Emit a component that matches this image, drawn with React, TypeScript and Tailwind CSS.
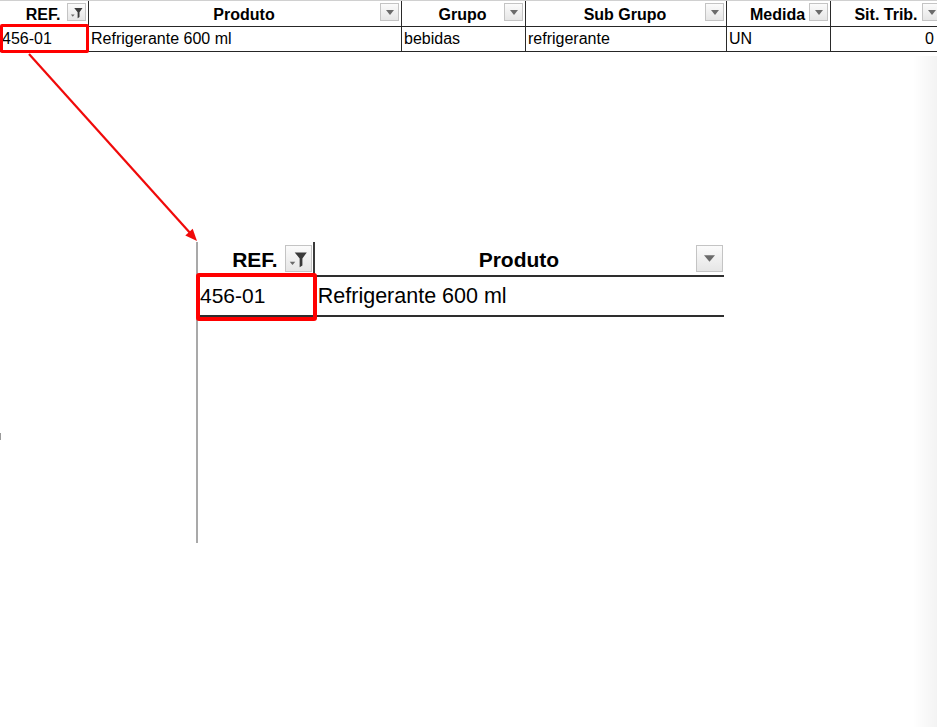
import React from "react";

const font = { fontFamily: '"Liberation Sans", Arial, sans-serif' };

type Col = { label: string; width: string; value: string; align?: "right" };

const columns: Col[] = [
  { label: "REF.", width: "w-[89px]", value: "456-01" },
  { label: "Produto", width: "w-[313px]", value: "Refrigerante 600 ml" },
  { label: "Grupo", width: "w-[124px]", value: "bebidas" },
  { label: "Sub Grupo", width: "w-[201px]", value: "refrigerante" },
  { label: "Medida", width: "w-[104px]", value: "UN" },
  { label: "Sit. Trib.", width: "w-[113px]", value: "0", align: "right" },
];

function DropButton({ big, filtered }: { big?: boolean; filtered?: boolean }) {
  const size = big ? "w-[27px] h-[27px]" : "w-[19px] h-[18px]";
  return (
    <div
      className={`${size} flex items-center justify-center border border-[#c4c4c4] bg-gradient-to-b from-[#fbfbfb] to-[#e6e6e6]`}
    >
      {filtered ? (
        <svg viewBox="0 0 20 20" className={big ? "w-[22px] h-[22px]" : "w-[15px] h-[15px]"}>
          <path d="M7 4 H18 L14 9.5 V16 L11.5 17.5 V9.5 Z" fill="#3a3a3a" />
          <path d="M2.5 12.5 H7.5 L5 15.5 Z" fill="#6a6a6a" />
        </svg>
      ) : (
        <svg viewBox="0 0 10 6" className={big ? "w-[11px] h-[7px]" : "w-[8px] h-[5px]"}>
          <path d="M0 0 H10 L5 6 Z" fill="#6b6b6b" />
        </svg>
      )}
    </div>
  );
}

function Arrow() {
  return (
    <svg
      className="absolute left-0 top-0 pointer-events-none"
      width="210"
      height="250"
      viewBox="0 0 210 250"
    >
      <line x1="29" y1="54" x2="191" y2="234" stroke="#f00a0a" strokeWidth="2.2" />
      <polygon points="197,241 185.3,235.4 192.7,228.7" fill="#f00a0a" />
    </svg>
  );
}

export default function App() {
  return (
    <div className="relative w-[937px] h-[727px] bg-white overflow-hidden text-black" style={font}>
      {/* sheet table */}
      <div className="w-[1000px]">
        <div className="flex h-[27px] border-t border-[#d0d0d0] border-b border-b-[#262626]">
          {columns.map((c, i) => (
            <div
              key={c.label}
              className={`${c.width} grid grid-cols-[1fr_auto_1fr] items-center border-r border-[#2a2a2a] pr-[2px] text-[16px] font-bold`}
            >
              <span />
              <span className="pt-[2px]">{c.label}</span>
              <div className="justify-self-end self-start pt-[2px]">
                <DropButton filtered={i === 0} />
              </div>
            </div>
          ))}
        </div>
        <div className="flex h-[25px] border-b border-[#262626]">
          {columns.map((c, i) => (
            <div
              key={c.label}
              className={`${c.width} relative flex items-center border-r border-[#2a2a2a] text-[16px] px-[2px] ${
                c.align === "right" ? "justify-end pr-[9px]" : ""
              }`}
            >
              {c.value}
              {i === 0 && (
                <div className="absolute left-0 top-[-3px] w-[89px] h-[29px] border-[3px] border-[#ff0000] rounded-[2px]" />
              )}
            </div>
          ))}
        </div>
      </div>

      {/* zoomed callout */}
      <div className="ml-[196px] mt-[190px] w-[528px] h-[301px] border-l-2 border-[#a9a9a9]">
        <div className="flex h-[35px] border-b-2 border-[#2e2e2e]">
          <div className="w-[117px] grid grid-cols-[1fr_auto_1fr] items-center border-r-2 border-[#3a3a3a] pr-[1px] text-[21px] font-bold">
            <span />
            <span className="pt-[2px]">REF.</span>
            <div className="justify-self-end">
              <DropButton big filtered />
            </div>
          </div>
          <div className="w-[410px] grid grid-cols-[1fr_auto_1fr] items-center pr-[1px] text-[21px] font-bold overflow-hidden">
            <span />
            <span className="pt-[2px]">Produto</span>
            <div className="justify-self-end">
              <DropButton big />
            </div>
          </div>
        </div>
        <div className="flex h-[40px] border-b-2 border-[#2e2e2e]">
          <div className="w-[117px] relative flex items-center text-[21px] pl-[2px]">
            456-01
            <div className="absolute left-[-2px] top-[-4px] w-[121px] h-[48px] border-4 border-[#ff0000] rounded-[3px]" />
          </div>
          <div className="w-[410px] flex items-center text-[21.5px] pl-[3px] overflow-hidden">
            Refrigerante 600 ml
          </div>
        </div>
      </div>

      <Arrow />

      <div className="absolute left-0 top-[433px] w-[1px] h-[7px] bg-[#9a9a9a]" />
      <div className="absolute right-0 top-[56px] bottom-0 w-[24px] bg-gradient-to-r from-transparent to-[#f3f3f3] pointer-events-none" />
    </div>
  );
}
